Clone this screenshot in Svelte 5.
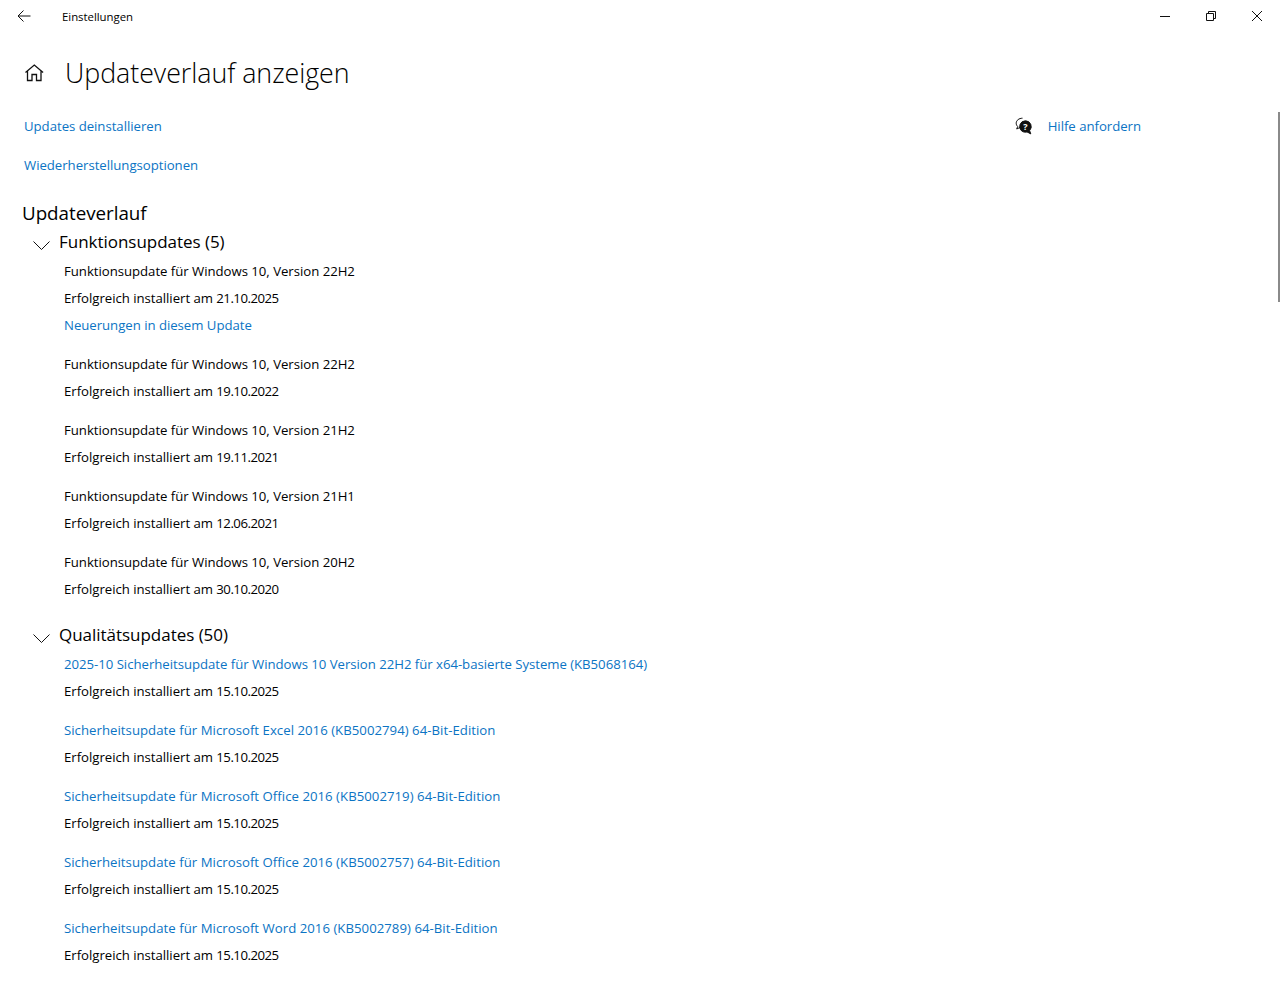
<script>
	const funktions = [
		{ name: 'Funktionsupdate für Windows 10, Version 22H2', date: '21.10.2025', more: 'Neuerungen in diesem Update' },
		{ name: 'Funktionsupdate für Windows 10, Version 22H2', date: '19.10.2022' },
		{ name: 'Funktionsupdate für Windows 10, Version 21H2', date: '19.11.2021' },
		{ name: 'Funktionsupdate für Windows 10, Version 21H1', date: '12.06.2021' },
		{ name: 'Funktionsupdate für Windows 10, Version 20H2', date: '30.10.2020' }
	];

	const quality = [
		{ name: '2025-10 Sicherheitsupdate für Windows 10 Version 22H2 für x64-basierte Systeme (KB5068164)', date: '15.10.2025' },
		{ name: 'Sicherheitsupdate für Microsoft Excel 2016 (KB5002794) 64-Bit-Edition', date: '15.10.2025' },
		{ name: 'Sicherheitsupdate für Microsoft Office 2016 (KB5002719) 64-Bit-Edition', date: '15.10.2025' },
		{ name: 'Sicherheitsupdate für Microsoft Office 2016 (KB5002757) 64-Bit-Edition', date: '15.10.2025' },
		{ name: 'Sicherheitsupdate für Microsoft Word 2016 (KB5002789) 64-Bit-Edition', date: '15.10.2025' }
	];
</script>

<div class="window">
	<header class="titlebar">
		<button class="back" aria-label="Zurück">
			<svg width="16" height="16" viewBox="0 0 16 16"><path d="M14.5 8H2M7.5 2.5 2 8l5.5 5.5" /></svg>
		</button>
		<span class="apptitle">Einstellungen</span>
		<div class="controls">
			<svg width="46" height="32" viewBox="0 0 46 32"><path d="M18 16.5h10" /></svg>
			<svg width="46" height="32" viewBox="0 0 46 32"><path d="M18.5 13.5h7v7h-7zM20.500 13.5v-2h7v7h-2" /></svg>
			<svg width="46" height="32" viewBox="0 0 46 32"><path d="m18 11 10 10M28 11 18 21" /></svg>
		</div>
	</header>

	<div class="scrollbar"></div>

	<main class="page">
		<div class="heading">
			<svg class="home" width="20" height="20" viewBox="0 0 20 20">
				<path d="M1.500 10.500 10.300 3l8.800 7.500M3.500 9v9.500H8v-6h4.500v6H17V9" />
			</svg>
			<h1>Updateverlauf anzeigen</h1>
		</div>

		<div class="top">
			<div class="toplinks">
				<a href="#a">Updates deinstallieren</a>
				<a href="#b">Wiederherstellungsoptionen</a>
			</div>
			<div class="help">
				<svg width="18" height="18" viewBox="0 0 18 18">
					<path d="M7.500 1.200C4 1.200 1.200 3.400 1.200 6.200c0 1.400.6 2.500 1.500 3.300L1.700 12l3.200-1.500" />
					<path class="solid" d="M10.500 3.800a5.800 5.800 0 0 0-3.800 10.200c1.300 1 3.400 1.500 5.300.9l3.800 2-1.200-3.300a5.800 5.800 0 0 0-4.100-9.800z" />
					<text x="10.500" y="13.300" text-anchor="middle" class="q">?</text>
				</svg>
				<a href="#c">Hilfe anfordern</a>
			</div>
		</div>

		<h2>Updateverlauf</h2>

		<section class="group">
			<div class="grouphead">
				<svg width="17" height="9" viewBox="0 0 17 9"><path d="m.5 .5 8 8 8-8" /></svg>
				<h3>Funktionsupdates (5)</h3>
			</div>
			{#each funktions as item}
				<div class="item">
					<div class="line">{item.name}</div>
					<div class="line">Erfolgreich installiert am <span class="date">{item.date}</span></div>
					{#if item.more}
						<div class="line"><a href="#d">{item.more}</a></div>
					{/if}
				</div>
			{/each}
		</section>

		<section class="group">
			<div class="grouphead">
				<svg width="17" height="9" viewBox="0 0 17 9"><path d="m.5 .5 8 8 8-8" /></svg>
				<h3>Qualitätsupdates (50)</h3>
			</div>
			{#each quality as item}
				<div class="item">
					<div class="line"><a href="#e">{item.name}</a></div>
					<div class="line">Erfolgreich installiert am <span class="date">{item.date}</span></div>
				</div>
			{/each}
		</section>
	</main>
</div>

<style>
	:global(body) {
		background: #fff;
		overflow: hidden;
	}

	.window {
		position: relative;
		height: 984px;
		overflow: hidden;
		font-family: 'Open Sans', 'Noto Sans', sans-serif;
		font-size: 13.2px;
		letter-spacing: -0.03px;
		color: #000;
	}

	svg path {
		fill: none;
		stroke: #111;
		stroke-width: 1;
	}

	a {
		color: #0b74c4;
		text-decoration: none;
	}

	.titlebar {
		display: flex;
		align-items: center;
		height: 32px;
	}

	.back {
		display: flex;
		align-items: center;
		justify-content: center;
		width: 48px;
		height: 32px;
		padding: 0;
		border: 0;
		background: none;
	}

	.apptitle {
		margin-left: 14px;
		font-size: 11.4px;
	}

	.controls {
		display: flex;
		margin-left: auto;
	}

	.scrollbar {
		position: absolute;
		top: 112px;
		right: 0;
		width: 2px;
		height: 190px;
		background: #8a8a8a;
	}

	.page {
		padding: 0 24px;
	}

	.heading {
		display: flex;
		align-items: center;
		gap: 21px;
		height: 40px;
		margin-top: 20px;
	}

	.home {
		flex: none;
	}

	.home path {
		stroke-width: 1.3;
	}

	h1 {
		margin: 0;
		font-size: 26.8px;
		font-weight: 300;
		color: #000;
	}

	.top {
		display: flex;
		justify-content: space-between;
		margin-top: 24px;
		padding-right: 115px;
	}

	.toplinks {
		display: flex;
		flex-direction: column;
		gap: 19px;
		line-height: 20px;
	}

	.help {
		display: flex;
		align-items: flex-start;
		gap: 15px;
		line-height: 20px;
	}

	.help svg {
		margin-top: 1px;
	}

	.help .solid {
		fill: #111;
	}

	.q {
		font-size: 9px;
		font-weight: 700;
		fill: #fff;
	}

	h2 {
		margin: 24px 0 0 -2px;
		font-size: 18.8px;
		font-weight: 400;
		line-height: 28px;
	}

	.group {
		margin-bottom: 17px;
	}

	.grouphead {
		display: flex;
		align-items: center;
		gap: 9px;
		height: 30px;
		margin-bottom: 1px;
		margin-left: 9px;
	}

	.grouphead svg {
		margin-top: 6px;
	}

	h3 {
		margin: 0;
		font-size: 17px;
		font-weight: 400;
		line-height: 28px;
	}

	.item {
		margin-left: 40px;
		margin-bottom: 12px;
	}

	.item + .item a {
		letter-spacing: 0.03px;
	}

	.line {
		height: 27px;
		line-height: 27px;
		white-space: nowrap;
	}

	.date {
		letter-spacing: -0.5px;
	}
</style>
